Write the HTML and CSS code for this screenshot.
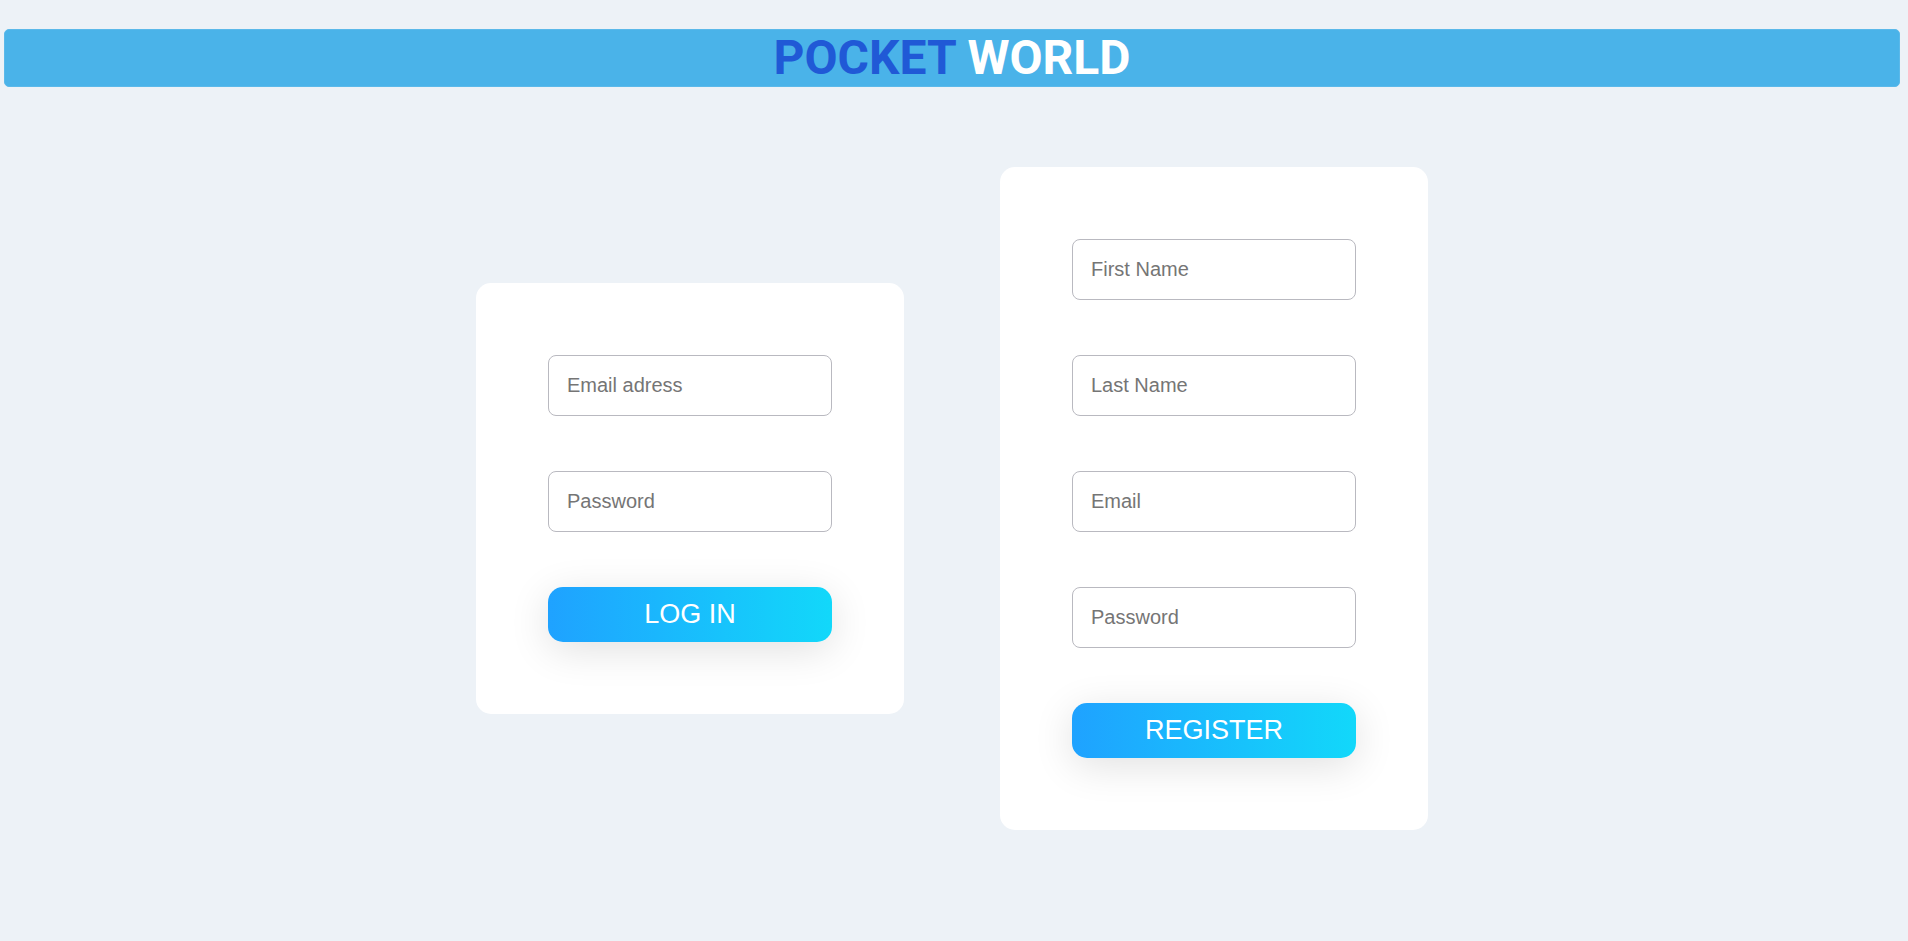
FILE: index.html
```html
<!DOCTYPE html>
<html lang="en">
<head>
<meta charset="utf-8">
<title>Pocket World</title>
<link rel="stylesheet" href="styles.css">
</head>
<body>
<div class="page">
  <header class="topbar">
    <h1 class="brand"><span class="brand-a">POCKET</span> <span class="brand-b">WORLD</span></h1>
  </header>
  <main class="forms">
    <form class="card">
      <input class="field" type="email" placeholder="Email adress">
      <input class="field" type="password" placeholder="Password">
      <button class="btn" type="button">LOG IN</button>
    </form>
    <form class="card">
      <input class="field" type="text" placeholder="First Name">
      <input class="field" type="text" placeholder="Last Name">
      <input class="field" type="email" placeholder="Email">
      <input class="field" type="password" placeholder="Password">
      <button class="btn" type="button">REGISTER</button>
    </form>
  </main>
</div>
</body>
</html>
```

FILE: styles.css
```css
* { box-sizing: border-box; }
html, body { margin: 0; padding: 0; }
body {
  background: #edf2f7;
  font-family: "Liberation Sans", Arial, sans-serif;
  height: 941px;
  overflow: hidden;
}
.page {
  padding: 29px 8px 0 4px;
}
.topbar {
  height: 58px;
  background: #4ab3e9;
  border: 1px solid #5bb9ea;
  border-radius: 5px;
  display: flex;
  align-items: center;
  justify-content: center;
}
.brand {
  margin: 0;
  font-family: Roboto, "Liberation Sans", sans-serif;
  font-weight: 700;
  font-size: 48px;
  line-height: 1;
}
.brand-a { color: #2059d6; }
.brand-b { color: #ffffff; }
.forms {
  margin-top: 80px;
  display: flex;
  justify-content: center;
  align-items: center;
  gap: 96px;
}
.card {
  width: 428px;
  background: #ffffff;
  border-radius: 15px;
  padding: 72px;
  display: flex;
  flex-direction: column;
  gap: 55px;
}
.field {
  width: 284px;
  height: 61px;
  border: 1px solid #b9b9c0;
  border-radius: 8px;
  padding: 0 18px;
  font-family: "Liberation Sans", Arial, sans-serif;
  font-size: 20px;
  color: #333;
  background: #fff;
  outline: none;
}
.field::placeholder { color: #757575; }
.btn {
  width: 284px;
  height: 55px;
  border: none;
  border-radius: 15px;
  background: linear-gradient(to right, #1fa2ff, #12d8fa);
  color: #ffffff;
  font-family: "Liberation Sans", Arial, sans-serif;
  font-size: 27px;
  box-shadow: 0 8px 40px rgba(0, 0, 0, 0.12);
  cursor: pointer;
}
```
